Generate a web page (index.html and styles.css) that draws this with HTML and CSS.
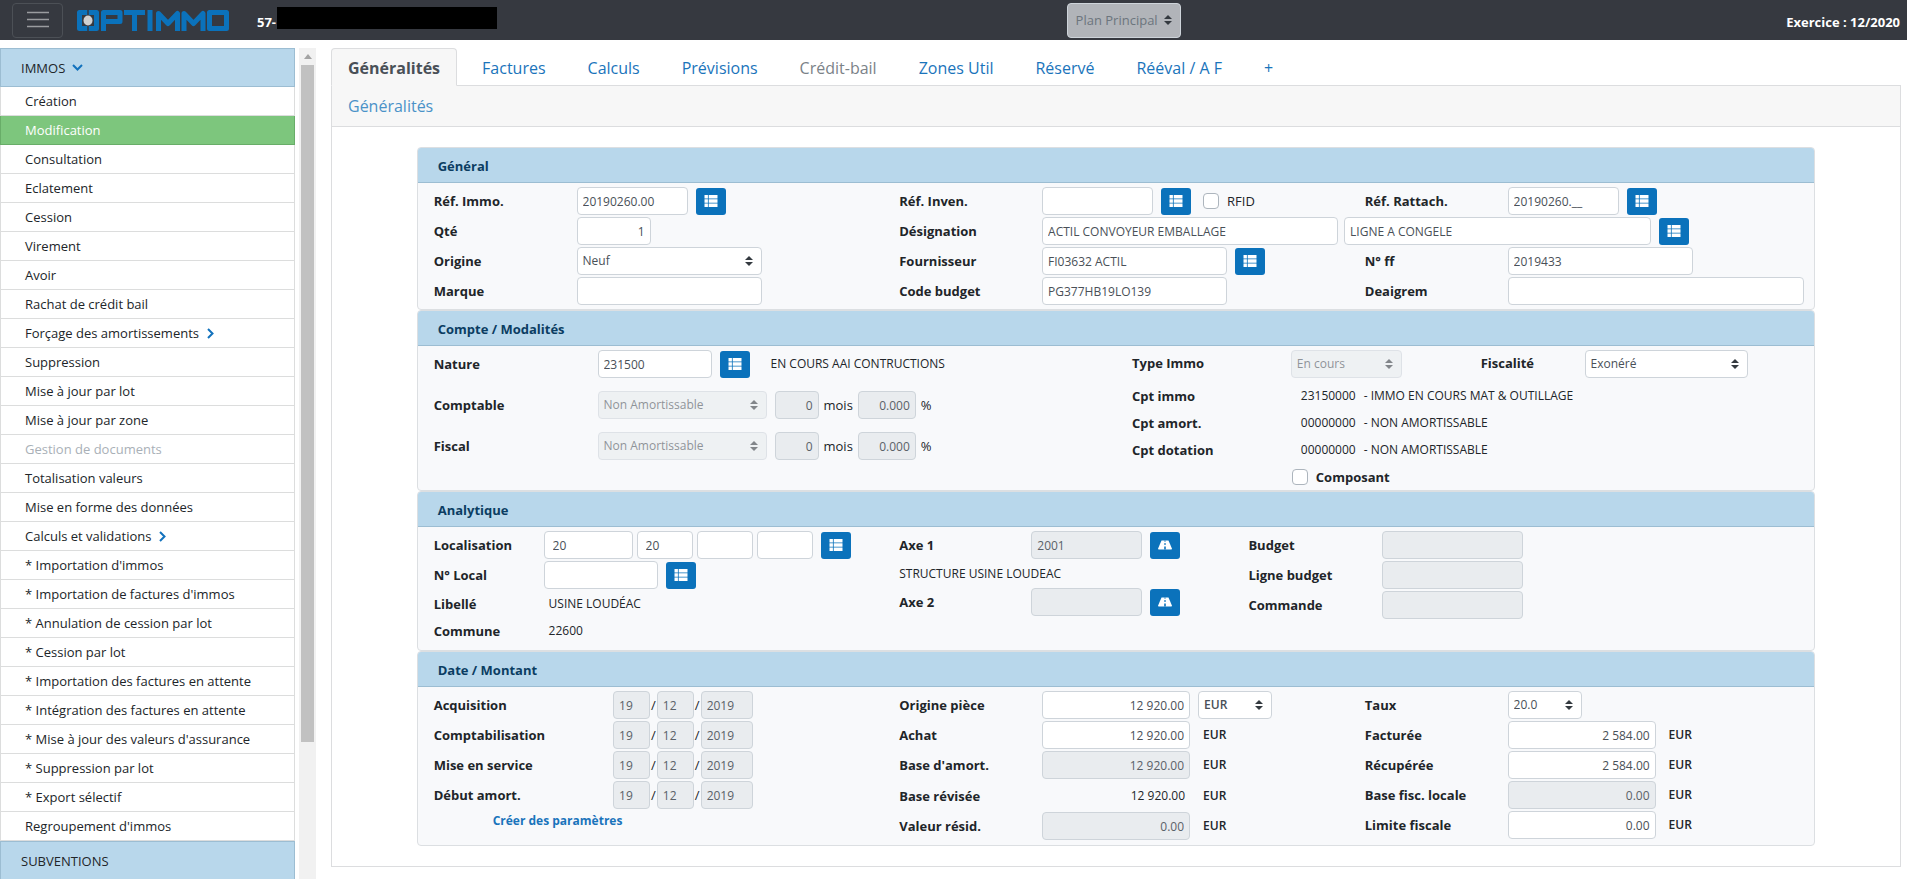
FILE: index.html
```html
<!DOCTYPE html>
<html lang="fr">
<head>
<meta charset="utf-8">
<title>Optimmo</title>
<link rel="stylesheet" href="styles.css">
</head>
<body>
<svg class="defs" aria-hidden="true">
  <symbol id="i-list" viewBox="0 0 13 12"><path fill="#fff" d="M0 0h3.400v3.400H0zM4.200 0H13v3.400H4.200zM0 4.300h3.400v3.400H0zM4.200 4.300H13v3.400H4.200zM0 8.600h3.400V12H0zM4.200 8.600H13V12H4.200z"/></symbol>
  <symbol id="i-road" viewBox="0 0 14 9"><path fill="#fff" d="M3.500 0h7L14 8.300q0 .7-.8.700H.8Q0 9 0 8.300z"/><path fill="#0b72bb" d="M6.500 0h1v1.300h-1zM6.400 2.600h1.200v1.900H6.400zM6.200 6h1.600v3H6.200z"/></symbol>
</svg>
<header class="topbar">
  <button class="burger" aria-label="Menu"><svg width="22" height="18" viewBox="0 0 22 18"><path d="M0 1.500h22M0 8.500h22M0 15.500h22" stroke="#9a9c9f" stroke-width="1.500"/></svg></button>
  <svg class="logo" width="152" height="21" viewBox="0 0 152 21" role="img" aria-label="Optimmo"><g fill="none" stroke="#0b72bb" stroke-width="5" stroke-linejoin="round"><path d="M10.500 2.500h-8v16h8M11.500 2.500h8v16h-8M26.500 21V2.500h16.500v9H27M47 2.500h21M57.500 3v18M73 0v21M81.500 21V3.500l9.500 10 9.500-10V21M107 21V3.500l9.500 10 9.500-10V21M132.500 2.500h17v16h-17z"/></g><path d="M11 0v21" stroke="#363940"/><ellipse cx="11" cy="10.500" rx="4.500" ry="5" fill="#d0d0d0"/></svg>
  <span class="company">57-</span><span class="masked"></span>
  <select class="plan" aria-label="Plan" disabled><option>Plan Principal</option></select>
  <span class="exercise">Exercice : 12/2020</span>
</header>
<div class="layout">
  <nav class="side">
    <div class="menu">
      <a class="head" href="#">IMMOS <svg width="11" height="7" viewBox="0 0 11 7"><path d="M1 1l4.500 4.500L10 1" fill="none" stroke="#1272bd" stroke-width="2"/></svg></a>
      <a href="#">Création</a>
      <a class="on" href="#">Modification</a>
      <a href="#">Consultation</a>
      <a href="#">Eclatement</a>
      <a href="#">Cession</a>
      <a href="#">Virement</a>
      <a href="#">Avoir</a>
      <a href="#">Rachat de crédit bail</a>
      <a href="#">Forçage des amortissements <svg width="7" height="11" viewBox="0 0 7 11"><path d="M1 1l4.500 4.500L1 10" fill="none" stroke="#1272bd" stroke-width="2"/></svg></a>
      <a href="#">Suppression</a>
      <a href="#">Mise à jour par lot</a>
      <a href="#">Mise à jour par zone</a>
      <a class="off" href="#">Gestion de documents</a>
      <a href="#">Totalisation valeurs</a>
      <a href="#">Mise en forme des données</a>
      <a href="#">Calculs et validations <svg width="7" height="11" viewBox="0 0 7 11"><path d="M1 1l4.500 4.500L1 10" fill="none" stroke="#1272bd" stroke-width="2"/></svg></a>
      <a href="#">* Importation d'immos</a>
      <a href="#">* Importation de factures d'immos</a>
      <a href="#">* Annulation de cession par lot</a>
      <a href="#">* Cession par lot</a>
      <a href="#">* Importation des factures en attente</a>
      <a href="#">* Intégration des factures en attente</a>
      <a href="#">* Mise à jour des valeurs d'assurance</a>
      <a href="#">* Suppression par lot</a>
      <a href="#">* Export sélectif</a>
      <a href="#">Regroupement d'immos</a>
      <a class="head" href="#">SUBVENTIONS</a>
      <a class="head" href="#"></a>
    </div>
    <div class="scroll"><svg width="8" height="5" viewBox="0 0 8 5"><path d="M4 0l4 5H0z" fill="#a3a3a3"/></svg><div class="thumb"></div></div>
  </nav>
  <main class="main">
    <div class="tabs">
      <a class="tab current" href="#">Généralités</a>
      <a class="tab" href="#">Factures</a>
      <a class="tab" href="#">Calculs</a>
      <a class="tab" href="#">Prévisions</a>
      <a class="tab dim" href="#">Crédit-bail</a>
      <a class="tab" href="#">Zones Util</a>
      <a class="tab" href="#">Réservé</a>
      <a class="tab" href="#">Rééval / A F</a>
      <a class="tab plus" href="#">+</a>
    </div>
    <div class="card">
      <h1 class="title">Généralités</h1>
      <form class="panels">
        <section class="panel">
          <h2>Général</h2>
          <div class="thirds rows">
            <div class="row"><label for="immo">Réf. Immo.</label><div class="field"><input id="immo" class="w-m" value="20190260.00"><button type="button" class="btn" aria-label="Liste"><svg><use href="#i-list"/></svg></button></div></div>
            <div class="row"><label for="inven">Réf. Inven.</label><div class="field"><input id="inven" class="w-m"><button type="button" class="btn" aria-label="Liste"><svg><use href="#i-list"/></svg></button><span class="check"><input type="checkbox" id="rfid"><label class="plain" for="rfid">RFID</label></span></div></div>
            <div class="row"><label for="ratt">Réf. Rattach.</label><div class="field"><input id="ratt" class="w-m" value="20190260.__"><button type="button" class="btn" aria-label="Liste"><svg><use href="#i-list"/></svg></button></div></div>
            <div class="row"><label for="qte">Qté</label><div class="field"><input id="qte" class="w-s num" value="1"></div></div>
            <div class="row double"><label for="desi">Désignation</label><div class="field tight"><input id="desi" class="w-xl" value="ACTIL CONVOYEUR EMBALLAGE"><input class="w-xl2" aria-label="Désignation 2" value="LIGNE A CONGELE"><button type="button" class="btn" aria-label="Liste"><svg><use href="#i-list"/></svg></button></div></div>
            <div class="row"><label for="orig">Origine</label><div class="field"><select id="orig" class="w-l"><option>Neuf</option></select></div></div>
            <div class="row"><label for="four">Fournisseur</label><div class="field"><input id="four" class="w-l" value="FI03632 ACTIL"><button type="button" class="btn" aria-label="Liste"><svg><use href="#i-list"/></svg></button></div></div>
            <div class="row"><label for="nff">N° ff</label><div class="field"><input id="nff" class="w-l" value="2019433"></div></div>
            <div class="row"><label for="marq">Marque</label><div class="field"><input id="marq" class="w-l"></div></div>
            <div class="row"><label for="cbud">Code budget</label><div class="field"><input id="cbud" class="w-l" value="PG377HB19LO139"></div></div>
            <div class="row"><label for="deai">Deaigrem</label><div class="field"><input id="deai" class="w-xl"></div></div>
          </div>
        </section>
        <section class="panel">
          <h2>Compte / Modalités</h2>
          <div class="halves">
            <div class="rows modes">
              <div class="row"><label for="nat">Nature</label><div class="field"><input id="nat" class="w-nat" value="231500"><button type="button" class="btn" aria-label="Liste"><svg><use href="#i-list"/></svg></button><span class="caption">EN COURS AAI CONTRUCTIONS</span></div></div>
              <div class="row"><label for="cpt">Comptable</label><div class="field"><select id="cpt" class="w-ml" disabled><option>Non Amortissable</option></select><span class="units"><input class="w-xs num" aria-label="Mois comptable" value="0" disabled>mois<input class="w-rate num" aria-label="Taux comptable" value="0.000" disabled>%</span></div></div>
              <div class="row"><label for="fis">Fiscal</label><div class="field"><select id="fis" class="w-ml" disabled><option>Non Amortissable</option></select><span class="units"><input class="w-xs num" aria-label="Mois fiscal" value="0" disabled>mois<input class="w-rate num" aria-label="Taux fiscal" value="0.000" disabled>%</span></div></div>
            </div>
            <div class="rows accounts">
              <div class="row types"><label for="typ">Type Immo</label><div class="field"><select id="typ" class="w-m" disabled><option>En cours</option></select></div><label for="fisc">Fiscalité</label><div class="field"><select id="fisc" class="w-fisc"><option>Exonéré</option></select></div></div>
              <div class="row"><b>Cpt immo</b><div class="field code"><span>23150000</span><span>- IMMO EN COURS MAT &amp; OUTILLAGE</span></div></div>
              <div class="row"><b>Cpt amort.</b><div class="field code"><span>00000000</span><span>- NON AMORTISSABLE</span></div></div>
              <div class="row"><b>Cpt dotation</b><div class="field code"><span>00000000</span><span>- NON AMORTISSABLE</span></div></div>
              <div class="row"><span></span><div class="field"><span class="check first"><input type="checkbox" id="comp"><label for="comp">Composant</label></span></div></div>
            </div>
          </div>
        </section>
        <section class="panel">
          <h2>Analytique</h2>
          <div class="analytic">
            <div class="rows place">
              <div class="row"><label for="loc">Localisation</label><div class="field segs"><input id="loc" class="w-loc" value="20"><input class="w-seg" aria-label="Localisation 2" value="20"><input class="w-seg" aria-label="Localisation 3"><input class="w-seg" aria-label="Localisation 4"><button type="button" class="btn" aria-label="Liste"><svg><use href="#i-list"/></svg></button></div></div>
              <div class="row"><label for="nloc">N° Local</label><div class="field"><input id="nloc" class="w-nat"><button type="button" class="btn" aria-label="Liste"><svg><use href="#i-list"/></svg></button></div></div>
              <div class="row short"><b>Libellé</b><div class="field inset">USINE LOUDÉAC</div></div>
              <div class="row short"><b>Commune</b><div class="field inset">22600</div></div>
            </div>
            <div class="rows axes">
              <div class="row"><label for="ax1">Axe 1</label><div class="field"><input id="ax1" class="w-m" value="2001" disabled><button type="button" class="btn" aria-label="Rechercher"><svg><use href="#i-road"/></svg></button></div></div>
              <div class="note">STRUCTURE USINE LOUDEAC</div>
              <div class="row"><label for="ax2">Axe 2</label><div class="field"><input id="ax2" class="w-m" disabled><button type="button" class="btn" aria-label="Rechercher"><svg><use href="#i-road"/></svg></button></div></div>
            </div>
            <div class="rows budget">
              <div class="row"><label for="bud">Budget</label><div class="field"><input id="bud" class="w-bud" disabled></div></div>
              <div class="row"><label for="lbud">Ligne budget</label><div class="field"><input id="lbud" class="w-bud" disabled></div></div>
              <div class="row"><label for="cmd">Commande</label><div class="field"><input id="cmd" class="w-bud" disabled></div></div>
            </div>
          </div>
        </section>
        <section class="panel">
          <h2>Date / Montant</h2>
          <div class="thirds amounts">
            <div class="rows dates">
              <div class="row"><label for="d1">Acquisition</label><div class="field date"><input id="d1" class="w-day" value="19" disabled>/<input class="w-day" aria-label="Mois" value="12" disabled>/<input class="w-year" aria-label="Année" value="2019" disabled></div></div>
              <div class="row"><label for="d2">Comptabilisation</label><div class="field date"><input id="d2" class="w-day" value="19" disabled>/<input class="w-day" aria-label="Mois" value="12" disabled>/<input class="w-year" aria-label="Année" value="2019" disabled></div></div>
              <div class="row"><label for="d3">Mise en service</label><div class="field date"><input id="d3" class="w-day" value="19" disabled>/<input class="w-day" aria-label="Mois" value="12" disabled>/<input class="w-year" aria-label="Année" value="2019" disabled></div></div>
              <div class="row"><label for="d4">Début amort.</label><div class="field date"><input id="d4" class="w-day" value="19" disabled>/<input class="w-day" aria-label="Mois" value="12" disabled>/<input class="w-year" aria-label="Année" value="2019" disabled></div></div>
              <a class="params" href="#">Créer des paramètres</a>
            </div>
            <div class="rows">
              <div class="row"><label for="op">Origine pièce</label><div class="field"><input id="op" class="w-amt num" value="12 920.00"><select class="w-s cur" aria-label="Devise"><option>EUR</option></select></div></div>
              <div class="row"><label for="ach">Achat</label><div class="field"><input id="ach" class="w-amt num" value="12 920.00"><span class="eur">EUR</span></div></div>
              <div class="row"><label for="bam">Base d'amort.</label><div class="field"><input id="bam" class="w-amt num" value="12 920.00" disabled><span class="eur">EUR</span></div></div>
              <div class="row revised"><b>Base révisée</b><div class="field"><span class="w-amt amount">12 920.00</span><span class="eur">EUR</span></div></div>
              <div class="row"><label for="vr">Valeur résid.</label><div class="field"><input id="vr" class="w-amt num" value="0.00" disabled><span class="eur">EUR</span></div></div>
            </div>
            <div class="rows">
              <div class="row"><label for="tx">Taux</label><div class="field"><select id="tx" class="w-s"><option>20.0</option></select></div></div>
              <div class="row"><label for="fac">Facturée</label><div class="field"><input id="fac" class="w-amt num" value="2 584.00"><span class="eur">EUR</span></div></div>
              <div class="row"><label for="rec">Récupérée</label><div class="field"><input id="rec" class="w-amt num" value="2 584.00"><span class="eur">EUR</span></div></div>
              <div class="row"><label for="bfl">Base fisc. locale</label><div class="field"><input id="bfl" class="w-amt num" value="0.00" disabled><span class="eur">EUR</span></div></div>
              <div class="row"><label for="lf">Limite fiscale</label><div class="field"><input id="lf" class="w-amt num" value="0.00"><span class="eur">EUR</span></div></div>
            </div>
          </div>
        </section>
      </form>
    </div>
  </main>
</div>
</body>
</html>
```

FILE: styles.css
```css
* { box-sizing: border-box; }
body { margin: 0; height: 100vh; overflow: hidden; display: flex; flex-direction: column; background: #fff; color: #212529; font: 13px/20px "Open Sans", "Noto Sans", sans-serif; }
a { color: inherit; text-decoration: none; }
.defs { display: none; }

.topbar { flex: none; display: grid; grid-template-columns: 65px 180px auto 220px 1fr auto; align-items: center; height: 40px; padding: 0 7px 0 12px; background: #363940; color: #fff; font-weight: 700; }
.burger { display: grid; place-items: center; width: 51px; height: 35px; padding: 0; background: none; border: 1px solid #4c5056; border-radius: 4px; }
.logo { display: block; }
.company { padding: 4px 1px 0 0; }
.masked { height: 22px; margin-bottom: 4px; background: #000; }
.plan { justify-self: center; width: 114px; height: 35px; margin-right: 36px; padding-left: 8px; font-size: 13px; }
.topbar .plan:disabled { background-color: #b1b4b9; color: #6c757d; opacity: 1; }
.exercise { padding-top: 4px; }

.layout { flex: 1; min-height: 0; display: flex; gap: 15px; padding-top: 8px; }
.side { flex: none; display: flex; gap: 4px; width: 316px; }
.menu { flex: 1; min-width: 0; overflow: hidden; }
.menu a { display: flex; align-items: center; gap: 8px; height: 29px; padding: 0 24px; border: 1px solid #dcdddd; border-top: 0; }
.menu .head { gap: 7px; height: 39px; padding: 0 20px; background: #b8d7eb; border-color: #9cbdd2; border-top: 1px solid #9cbdd2; }
.menu .head + .head { border-top: 0; }
.menu .on { background: #7dc67d; border-color: #68ad68; color: #fff; }
.menu .off { color: #a9b0b7; }
.scroll { width: 17px; background: #f1f1f1; display: flex; flex-direction: column; align-items: center; gap: 6px; padding-top: 6px; }
.scroll svg { flex: none; }
.thumb { width: 13px; height: 82%; background: #c1c1c1; }

.main { flex: 1; min-width: 0; padding-right: 6px; }
.tabs { display: flex; gap: 8px; margin-bottom: -1px; padding-right: 8px; }
.tab { height: 38px; padding: 0 16px; border: 1px solid transparent; border-radius: 4px 4px 0 0; color: #1a74bb; font-size: 16px; line-height: 38px; }
.tab.current { background: #f7f7f7; border-color: #dcdddf; border-bottom-color: #f7f7f7; color: #495057; font-weight: 700; }
.tab.dim { color: #7b8288; }
.card { border: 1px solid #dcdddf; padding-bottom: 20px; }
.title { margin: 0; padding: 0 16px; background: #f7f7f7; border-bottom: 1px solid #dcdddf; color: #4a92c8; font-size: 16px; font-weight: 400; line-height: 40px; }
.panels { width: 89.2%; margin: 20px auto 0; }
.panel { border: 1px solid #dcdfe2; border-radius: 4px; background: #f8f9fb; overflow: hidden; }
.panel h2 { margin: 0; padding: 2px 20px 0; background: #b8d7eb; border-bottom: 1px solid #9cbdd2; color: #0b3d62; font-size: 13px; font-weight: 700; line-height: 32px; }

.thirds { display: grid; grid-template-columns: repeat(3, 1fr); }
.halves { display: grid; grid-template-columns: 1fr 1fr; }
.analytic { display: grid; grid-template-columns: 4fr 3fr 5fr; padding-bottom: 3px; }
.amounts { padding-bottom: 1px; }
.rows { padding: 4px 0; row-gap: 2px; align-content: start; }
.rows:not(.thirds) { display: grid; }
.row { display: grid; grid-template-columns: 143fr 307fr; align-items: center; min-height: 28px; padding-left: 16px; }
.double { grid-column: span 2; grid-template-columns: 143fr 773fr; }
.revised { min-height: 29px; }
.field { display: flex; align-items: center; gap: 8px; min-width: 0; font-size: 12px; }
.tight { gap: 6px; }
.tight .btn { margin-left: 2px; }
label, b { font-weight: 700; }
.plain { font-weight: 400; }

.modes { row-gap: 13px; }
.modes .row { grid-template-columns: 164fr 519fr; }
.caption { margin-left: 13px; }
.units { display: flex; align-items: center; gap: 5px; font-size: 13px; }
.accounts { row-gap: 0; padding-bottom: 0; }
.accounts .row { grid-template-columns: 159fr 524fr; min-height: 27px; }
.accounts .types { grid-template-columns: 159fr 190fr 104fr 230fr; min-height: 32px; align-items: start; }
.types label { line-height: 26px; }
.code { padding-left: 10px; gap: 8px; }

.place .row { grid-template-columns: 110fr 340fr; }
.place .short { min-height: 25px; }
.segs { gap: 4px; }
.segs .btn { margin-left: 4px; }
.inset { padding-left: 5px; }
.axes .row { grid-template-columns: 132fr 201fr; }
.axes { row-gap: 0; }
.note { padding-left: 16px; line-height: 29px; font-size: 12px; }
.budget .row { grid-template-columns: 134fr 432fr; }
.dates .row { grid-template-columns: 180fr 271fr; }
.date { gap: 1px; font-size: 13px; }
.params { margin-left: 75px; color: #1a74bb; font-size: 12px; font-weight: 700; }
.eur { padding-left: 5px; font-weight: 600; }
.amount { padding-right: 5px; text-align: right; }

input, select { height: 28px; padding: 0 5px; border: 1px solid #ced4da; border-radius: 4px; background-color: #fff; color: #495057; font: 12px/20px "Open Sans", "Noto Sans", sans-serif; }
input:disabled { background: #e9ecef; color: #5a6168; }
select { appearance: none; background-image: url("data:image/svg+xml,%3Csvg xmlns='http://www.w3.org/2000/svg' viewBox='0 0 4 5'%3E%3Cpath fill='%23343a40' d='M2 0L0 2h4zm0 5L0 3h4z'/%3E%3C/svg%3E"); background-repeat: no-repeat; background-position: right 8px center; background-size: 8px 10px; }
select:disabled { background-color: #e9ecef; opacity: .6; }
.num { text-align: right; }
.cur { font-weight: 600; }
.btn { flex: none; display: grid; place-items: center; width: 30px; height: 27px; padding: 0; border: 0; border-radius: 3px; background: #0b72bb; }
.btn svg { width: 14px; height: 12px; }
.check { display: flex; align-items: center; gap: 8px; padding-left: 4px; font-size: 13px; }
.check.first { padding-left: 1px; }
.check input { appearance: none; width: 16px; height: 16px; margin: 0; padding: 0; border-color: #adb5bd; }
.w-xs { width: 44px; }
.w-s { width: 74px; }
.w-m { width: 111px; }
.w-nat { width: 114px; }
.w-ml { width: 169px; }
.w-l { width: 185px; }
.w-xl { width: 296px; }
.w-xl2 { width: 307px; }
.w-rate { width: 58px; }
.w-fisc { width: 163px; }
.w-loc { width: 89px; padding-left: 8px; }
.w-seg { width: 56px; padding-left: 8px; }
.w-bud { width: 141px; }
.w-day { width: 37px; }
.w-year { width: 52px; }
.w-amt { width: 148px; }
```
